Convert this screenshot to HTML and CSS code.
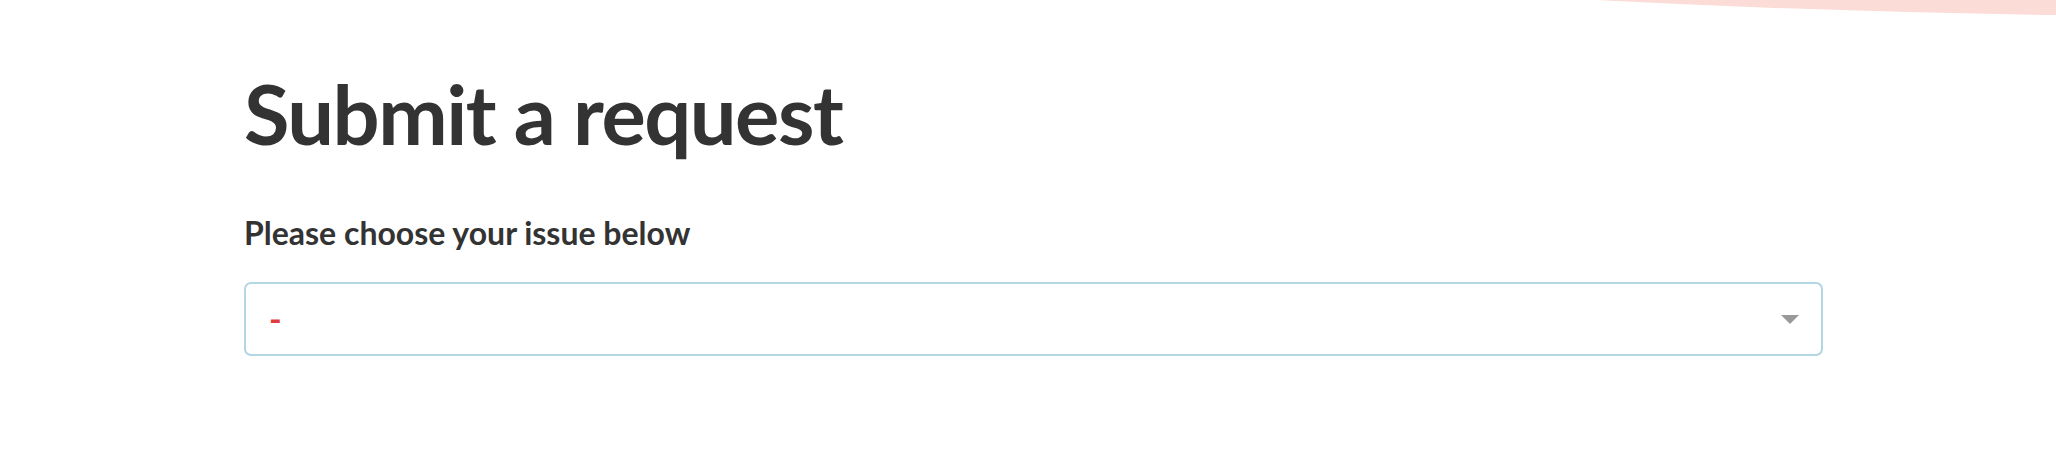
FILE: index.html
```html
<!DOCTYPE html>
<html lang="en">
<head>
<meta charset="utf-8">
<title>Submit a request</title>
<link rel="stylesheet" href="styles.css">
</head>
<body>
<svg class="corner-deco" width="460" height="20" viewBox="0 0 460 20" aria-hidden="true">
  <path d="M0,0 Q230,12 460,15 L460,0 Z" fill="#fbdcd7"/>
</svg>
<main class="page">
  <h1 class="title">Submit a request</h1>
  <label class="field-label" for="issue">Please choose your issue below</label>
  <div class="select" id="issue">
    <span class="select-value">-</span>
    <span class="select-arrow"></span>
  </div>
</main>
</body>
</html>
```
FILE: styles.css
```css
html, body {
  margin: 0;
  padding: 0;
  background: #ffffff;
}
body {
  font-family: Lato, "Open Sans", sans-serif;
  color: #333333;
  width: 2056px;
  height: 476px;
  overflow: hidden;
  position: relative;
}
.corner-deco {
  position: absolute;
  top: 0;
  right: 0;
  display: block;
}
.page {
  display: flex;
  flex-direction: column;
  align-items: flex-start;
  margin-left: 244px;
  padding-top: 72px;
  width: 1579px;
}
.title {
  margin: 0;
  font-size: 83px;
  font-weight: 700;
  line-height: 1;
  height: 83px;
  letter-spacing: -1.5px;
}
.field-label {
  display: block;
  margin-top: 62px;
  font-size: 32px;
  font-weight: 700;
  line-height: 1;
  height: 32px;
}
.select {
  box-sizing: border-box;
  margin-top: 33px;
  width: 100%;
  height: 74px;
  border: 2px solid #b2d6e4;
  border-radius: 7px;
  display: flex;
  align-items: center;
  justify-content: space-between;
  padding: 0 22px 0 23px;
}
.select-value {
  color: #e03c3c;
  font-size: 34px;
  font-weight: 700;
  line-height: 1;
}
.select-arrow {
  width: 0;
  height: 0;
  border-left: 9px solid transparent;
  border-right: 9px solid transparent;
  border-top: 9px solid #999999;
}
```
